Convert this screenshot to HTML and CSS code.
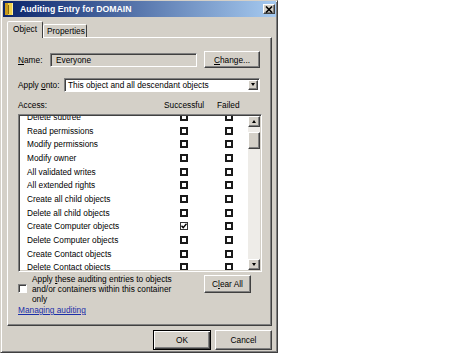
FILE: index.html
```html
<!DOCTYPE html>
<html>
<head>
<meta charset="utf-8">
<title>Auditing Entry for DOMAIN</title>
<link rel="stylesheet" href="styles.css">
</head>
<body>
<div class="window">
  <div class="titlebar">
    <svg class="ticon" width="9" height="12" viewBox="0 0 9 12">
      <rect x="0" y="0" width="8" height="12" fill="#f2d24a"/>
      <rect x="0" y="0" width="3" height="12" fill="#c99a1c"/>
      <rect x="3" y="2" width="1" height="9" fill="#8a6a10"/>
      <rect x="7" y="0" width="1" height="12" fill="#fff0a0"/>
    </svg>
    <span class="title">Auditing Entry for DOMAIN</span>
    <div class="closebtn">
      <svg width="8" height="7" viewBox="0 0 8 7"><path d="M1 0.5 L7 6.5 M7 0.5 L1 6.5" stroke="#000" stroke-width="1.6"/></svg>
    </div>
  </div>
  <div class="client">
    <div class="tabs">
      <div class="tab tab-active">Object</div>
      <div class="tab">Properties</div>
    </div>
    <div class="panel">
      <div class="name-row">
        <span class="lbl lbl-name"><u>N</u>ame:</span>
        <div class="textbox">Everyone</div>
        <div class="btn btn-change"><span><u>C</u>hange...</span></div>
      </div>
      <div class="apply-row">
        <span class="lbl lbl-apply">Apply <u>o</u>nto:</span>
        <div class="combo">
          <span class="combo-text">This object and all descendant objects</span>
          <div class="dd"><span class="arrow-down"></span></div>
        </div>
      </div>
      <div class="access-head">
        <span class="ah-access">Access:</span>
        <span class="ah-s">Successful</span>
        <span class="ah-f">Failed</span>
      </div>
      <div class="list">
        <div class="rows">
          <div class="rows-inner">
            <div class="lrow"><span class="ltext">Delete subtree</span><span class="chk"></span><span class="chk chk-f"></span></div>
            <div class="lrow"><span class="ltext">Read permissions</span><span class="chk"></span><span class="chk chk-f"></span></div>
            <div class="lrow"><span class="ltext">Modify permissions</span><span class="chk"></span><span class="chk chk-f"></span></div>
            <div class="lrow"><span class="ltext">Modify owner</span><span class="chk"></span><span class="chk chk-f"></span></div>
            <div class="lrow"><span class="ltext">All validated writes</span><span class="chk"></span><span class="chk chk-f"></span></div>
            <div class="lrow"><span class="ltext">All extended rights</span><span class="chk"></span><span class="chk chk-f"></span></div>
            <div class="lrow"><span class="ltext">Create all child objects</span><span class="chk"></span><span class="chk chk-f"></span></div>
            <div class="lrow"><span class="ltext">Delete all child objects</span><span class="chk"></span><span class="chk chk-f"></span></div>
            <div class="lrow"><span class="ltext">Create Computer objects</span><span class="chk chk-on"><svg width="6" height="6" viewBox="0 0 6 6"><path d="M0.5 2.8 L2.2 4.6 L5.5 0.8" fill="none" stroke="#000" stroke-width="1.4"/></svg></span><span class="chk chk-f"></span></div>
            <div class="lrow"><span class="ltext">Delete Computer objects</span><span class="chk"></span><span class="chk chk-f"></span></div>
            <div class="lrow"><span class="ltext">Create Contact objects</span><span class="chk"></span><span class="chk chk-f"></span></div>
            <div class="lrow"><span class="ltext">Delete Contact objects</span><span class="chk"></span><span class="chk chk-f"></span></div>
            <div class="lrow"><span class="ltext">Create Group objects</span><span class="chk"></span><span class="chk chk-f"></span></div>
          </div>
        </div>
        <div class="vscroll">
          <div class="sbtn"><span class="arrow-up"></span></div>
          <div class="track"><div class="thumb"></div></div>
          <div class="sbtn"><span class="arrow-down"></span></div>
        </div>
      </div>
      <div class="bottom-row">
        <span class="cb"></span>
        <div class="cbtext">Apply <u>t</u>hese auditing entries to objects<br>and/or containers within this container<br>only</div>
        <div class="btn btn-clear"><span>C<u>l</u>ear All</span></div>
      </div>
      <a class="link" href="#">Managing auditing</a>
    </div>
    <div class="footer">
      <div class="btn btn-ok"><span>OK</span></div>
      <div class="btn btn-cancel"><span>Cancel</span></div>
    </div>
  </div>
</div>
</body>
</html>
```
FILE: styles.css
```css
* { box-sizing: border-box; }
html, body { margin: 0; padding: 0; background: #fff; }
body {
  font-family: "Liberation Sans", Arial, sans-serif;
  font-size: 8.3px;
  color: #000;
}
u { text-decoration: underline; text-underline-offset: 1px; }

.window {
  width: 278px;
  height: 353px;
  background: #d4d0c8;
  border: 1px solid;
  border-color: #d4d0c8 #404040 #404040 #d4d0c8;
  box-shadow: inset 1px 1px #fff, inset -1px -1px #808080;
  padding: 0 1px 1px 1px;
  display: flex;
  flex-direction: column;
}

.titlebar {
  height: 16px;
  margin-left: 1px;
  background: linear-gradient(to right, #0a246a, #a6caf0);
  display: flex;
  align-items: center;
}
.ticon { margin-left: 2px; flex: none; }
.title {
  margin-left: 6px;
  color: #fff;
  font-weight: bold;
  font-size: 8.7px;
  flex: 1;
}
.closebtn {
  width: 12px;
  height: 10px;
  margin-right: 1px;
  background: #d4d0c8;
  border: 1px solid;
  border-color: #fff #404040 #404040 #fff;
  box-shadow: inset -1px -1px #808080;
  display: flex;
  align-items: center;
  justify-content: center;
}

.client {
  flex: 1;
  display: flex;
  flex-direction: column;
  padding: 4px 4px 0 5px;
}

.tabs {
  height: 16px;
  display: flex;
  align-items: flex-end;
  position: relative;
  z-index: 1;
}
.tab {
  height: 13px;
  padding: 0 4px;
  display: flex;
  align-items: center;
  background: #d4d0c8;
  border: 1px solid;
  border-bottom: none;
  border-color: #fff #404040 transparent #fff;
  border-radius: 2px 2px 0 0;
}
.tab-active {
  height: 17px;
  margin-bottom: -1px;
  width: 36px;
  padding: 0 0 2px 5px;
}
.tab:not(.tab-active) { width: 44px; padding-left: 3px; }

.panel {
  height: 289px;
  border: 1px solid;
  border-color: #fff #404040 #404040 #fff;
  box-shadow: inset -1px -1px #808080;
  padding: 13px 0 0 10px;
  display: flex;
  flex-direction: column;
}

.name-row {
  height: 17px;
  display: flex;
  align-items: center;
}
.lbl-name { width: 32px; }
.textbox {
  width: 147px;
  height: 14px;
  border: 1px solid;
  border-color: #808080 #fff #fff #808080;
  box-shadow: inset 1px 1px #404040;
  padding-left: 5px;
  display: flex;
  align-items: center;
  background: #d4d0c8;
}

.btn {
  background: #d4d0c8;
  border: 1px solid;
  border-color: #fff #404040 #404040 #fff;
  box-shadow: inset -1px -1px #808080;
  display: flex;
  align-items: center;
  justify-content: center;
}
.btn-change { width: 56px; height: 17px; margin-left: 7px; }

.apply-row {
  height: 15px;
  margin-top: 9px;
  display: flex;
  align-items: center;
}
.lbl-apply { width: 46px; }
.combo {
  width: 196px;
  height: 14px;
  background: #fff;
  border: 1px solid;
  border-color: #808080 #fff #fff #808080;
  box-shadow: inset 1px 1px #404040;
  display: flex;
  align-items: center;
  padding: 1px 1px 1px 3px;
}
.combo-text { flex: 1; }
.dd {
  width: 10px;
  height: 10px;
  background: #d4d0c8;
  border: 1px solid;
  border-color: #fff #404040 #404040 #fff;
  box-shadow: inset -1px -1px #808080;
  display: flex;
  align-items: center;
  justify-content: center;
}
.arrow-down, .arrow-up {
  width: 0;
  height: 0;
  border-left: 2.5px solid transparent;
  border-right: 2.5px solid transparent;
}
.arrow-down { border-top: 3px solid #000; }
.arrow-up { border-bottom: 3px solid #000; }

.access-head {
  height: 14px;
  margin-top: 6px;
  display: flex;
  align-items: center;
}
.ah-access { width: 146px; }
.ah-s { width: 53px; }

.list {
  width: 244px;
  height: 158px;
  margin-top: 2px;
  border: 1px solid;
  border-color: #808080 #fff #fff #808080;
  box-shadow: inset 1px 1px #404040;
  padding: 1px 1px 1px 1px;
  display: flex;
}
.rows {
  flex: 1;
  background: #fff;
  overflow: hidden;
}
.rows-inner { margin-top: -6px; }
.lrow {
  height: 13.7px;
  display: flex;
  align-items: center;
  padding-left: 7px;
}
.ltext { width: 153px; }
.chk {
  width: 8px;
  height: 8px;
  border: 2px solid #1a1a1a;
  background: #fff;
  display: flex;
  align-items: center;
  justify-content: center;
}
.chk-f { margin-left: 37px; }
.chk-on { border-width: 1.5px; border-color: #333; }

.vscroll {
  width: 12px;
  display: flex;
  flex-direction: column;
  background: #eeece8;
}
.sbtn {
  height: 11px;
  background: #d4d0c8;
  border: 1px solid;
  border-color: #fff #404040 #404040 #fff;
  box-shadow: inset -1px -1px #808080;
  display: flex;
  align-items: center;
  justify-content: center;
}
.track { flex: 1; }
.thumb {
  margin-top: 5px;
  height: 17px;
  background: #d4d0c8;
  border: 1px solid;
  border-color: #fff #404040 #404040 #fff;
  box-shadow: inset -1px -1px #808080;
}

.bottom-row {
  margin-top: 2px;
  display: flex;
  align-items: flex-start;
}
.cb {
  width: 9px;
  height: 9px;
  margin-top: 10px;
  margin-right: 5px;
  background: #fff;
  border: 1px solid;
  border-color: #808080 #fff #fff #808080;
  box-shadow: inset 1px 1px #404040;
  flex: none;
}
.cbtext {
  width: 172px;
  line-height: 10px;
}
.btn-clear {
  width: 47px;
  height: 18px;
  margin-top: 1px;
}

.link {
  margin-top: 1px;
  line-height: 10px;
  color: #1c2fa8;
  text-decoration: underline;
  align-self: flex-start;
}

.footer {
  margin-top: 4px;
  display: flex;
  justify-content: flex-end;
  gap: 4px;
}
.btn-ok {
  width: 58px;
  height: 20px;
  border: 1px solid #000;
  box-shadow: inset 1px 1px #fff, inset -1px -1px #404040, inset -2px -2px #808080;
}
.btn-cancel { width: 57px; height: 20px; }
```
